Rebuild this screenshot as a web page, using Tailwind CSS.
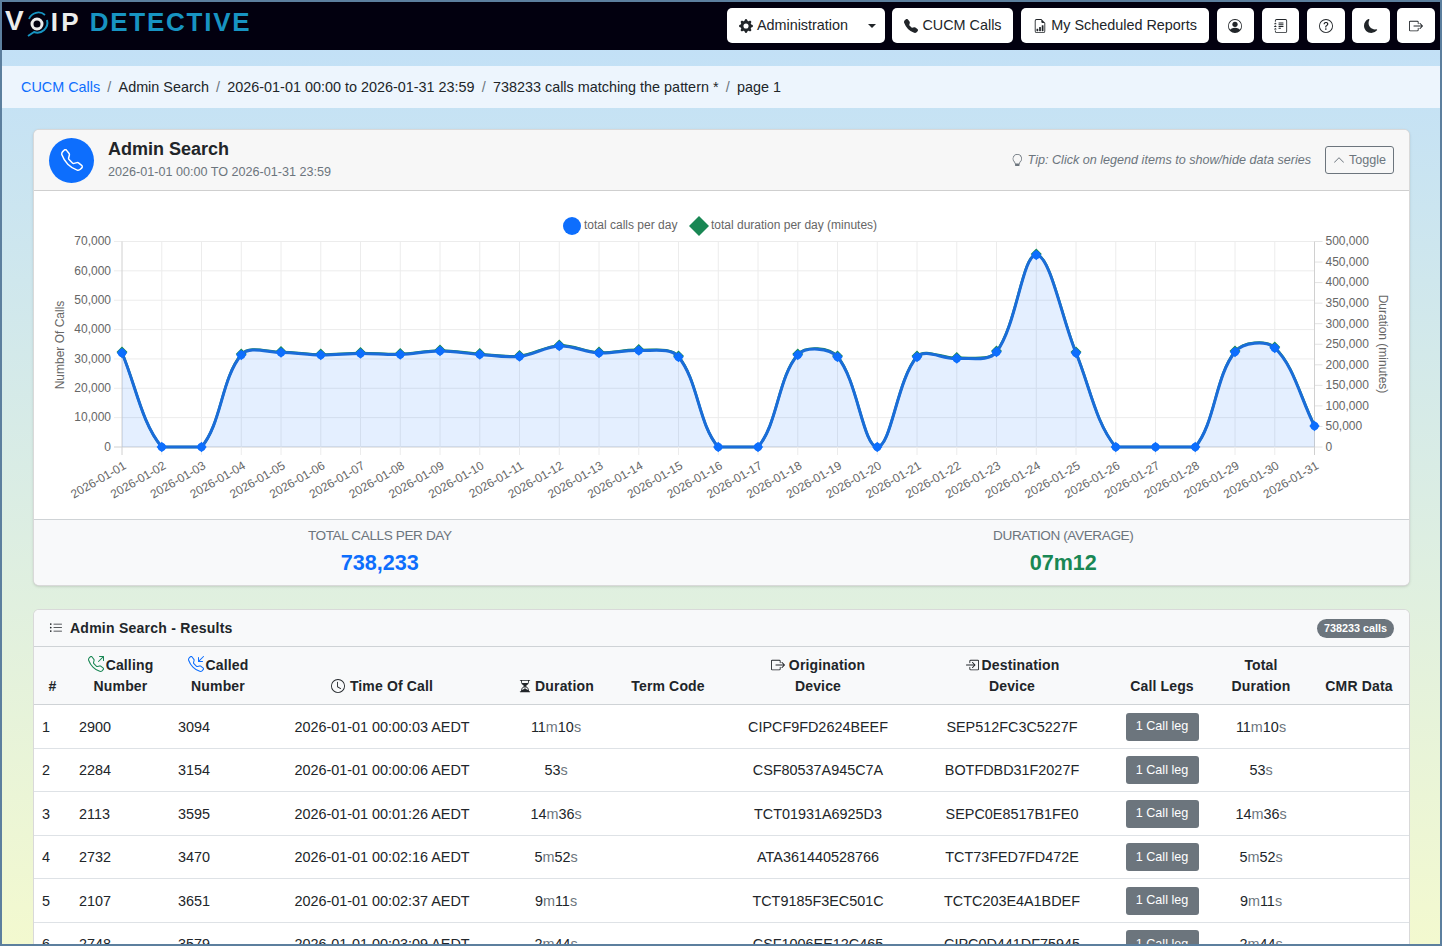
<!DOCTYPE html>
<html lang="en">
<head>
  <meta charset="UTF-8" />
  <title>VoIP Detective - Admin Search</title>
  <script src="https://cdn.jsdelivr.net/npm/@tailwindcss/browser@4"></script>
</head>
<body class="font-['Liberation_Sans',Arial,sans-serif] text-[14.4px] text-[#212529]">

  <!-- Icons -->
  <svg class="hidden">
    <symbol id="i-phone" viewBox="0 0 16 16"><path d="M3.654 1.328a.678.678 0 0 0-1.015-.063L1.605 2.3c-.483.484-.661 1.169-.45 1.77a17.6 17.6 0 0 0 4.168 6.608 17.6 17.6 0 0 0 6.608 4.168c.601.211 1.286.033 1.77-.45l1.034-1.034a.678.678 0 0 0-.063-1.015l-2.307-1.794a.68.68 0 0 0-.58-.122l-2.19.547a1.75 1.75 0 0 1-1.657-.459L5.482 8.062a1.75 1.75 0 0 1-.46-1.657l.548-2.19a.68.68 0 0 0-.122-.58zM1.884.511a1.745 1.745 0 0 1 2.612.163L6.29 2.98c.329.423.445.974.315 1.494l-.547 2.19a.68.68 0 0 0 .178.643l2.457 2.457a.68.68 0 0 0 .644.178l2.189-.547a1.75 1.75 0 0 1 1.494.315l2.306 1.794c.829.645.905 1.87.163 2.611l-1.034 1.034c-.74.74-1.846 1.065-2.877.702a18.6 18.6 0 0 1-7.01-4.42 18.6 18.6 0 0 1-4.42-7.009c-.362-1.03-.037-2.137.703-2.877z"/></symbol>
    <symbol id="i-phone-fill" viewBox="0 0 16 16"><path d="M1.885.511a1.745 1.745 0 0 1 2.61.163L6.29 2.98c.329.423.445.974.315 1.494l-.547 2.19a.68.68 0 0 0 .178.643l2.457 2.457a.68.68 0 0 0 .644.178l2.189-.547a1.75 1.75 0 0 1 1.494.315l2.306 1.794c.829.645.905 1.87.163 2.611l-1.034 1.034c-.74.74-1.846 1.065-2.877.702a18.6 18.6 0 0 1-7.01-4.42 18.6 18.6 0 0 1-4.42-7.009c-.362-1.03-.037-2.137.703-2.877z"/></symbol>
    <symbol id="i-gear" viewBox="0 0 16 16"><path d="M9.405 1.05c-.413-1.4-2.397-1.4-2.81 0l-.1.34a1.464 1.464 0 0 1-2.105.872l-.31-.17c-1.283-.698-2.686.705-1.987 1.987l.169.311c.446.82.023 1.841-.872 2.105l-.34.1c-1.4.413-1.4 2.397 0 2.81l.34.1a1.464 1.464 0 0 1 .872 2.105l-.17.31c-.698 1.283.705 2.686 1.987 1.987l.311-.169a1.464 1.464 0 0 1 2.105.872l.1.34c.413 1.4 2.397 1.4 2.81 0l.1-.34a1.464 1.464 0 0 1 2.105-.872l.31.17c1.283.698 2.686-.705 1.987-1.987l-.169-.311a1.464 1.464 0 0 1 .872-2.105l.34-.1c1.4-.413 1.4-2.397 0-2.81l-.34-.1a1.464 1.464 0 0 1-.872-2.105l.17-.31c.698-1.283-.705-2.686-1.987-1.987l-.311.169a1.464 1.464 0 0 1-2.105-.872zM8 10.93a2.929 2.929 0 1 1 0-5.86 2.929 2.929 0 0 1 0 5.858z"/></symbol>
    <symbol id="i-report" viewBox="0 0 16 16"><path d="M10 13.5a.5.5 0 0 0 .5.5h1a.5.5 0 0 0 .5-.5v-6a.5.5 0 0 0-.5-.5h-1a.5.5 0 0 0-.5.5zm-2.5.5a.5.5 0 0 1-.5-.5v-4a.5.5 0 0 1 .5-.5h1a.5.5 0 0 1 .5.5v4a.5.5 0 0 1-.5.5zm-3 0a.5.5 0 0 1-.5-.5v-2a.5.5 0 0 1 .5-.5h1a.5.5 0 0 1 .5.5v2a.5.5 0 0 1-.5.5z"/><path d="M14 14V4.5L9.5 0H4a2 2 0 0 0-2 2v12a2 2 0 0 0 2 2h8a2 2 0 0 0 2-2M9.5 3A1.5 1.5 0 0 0 11 4.5h2V14a1 1 0 0 1-1 1H4a1 1 0 0 1-1-1V2a1 1 0 0 1 1-1h5.5z"/></symbol>
    <symbol id="i-person" viewBox="0 0 16 16"><path d="M11 6a3 3 0 1 1-6 0 3 3 0 0 1 6 0"/><path fill-rule="evenodd" d="M0 8a8 8 0 1 1 16 0A8 8 0 0 1 0 8m8-7a7 7 0 0 0-5.468 11.37C3.242 11.226 4.805 10 8 10s4.757 1.225 5.468 2.37A7 7 0 0 0 8 1"/></symbol>
    <symbol id="i-journal" viewBox="0 0 16 16"><path d="M5 10.5a.5.5 0 0 1 .5-.5h2a.5.5 0 0 1 0 1h-2a.5.5 0 0 1-.5-.5m0-2a.5.5 0 0 1 .5-.5h5a.5.5 0 0 1 0 1h-5a.5.5 0 0 1-.5-.5m0-2a.5.5 0 0 1 .5-.5h5a.5.5 0 0 1 0 1h-5a.5.5 0 0 1-.5-.5m0-2a.5.5 0 0 1 .5-.5h5a.5.5 0 0 1 0 1h-5a.5.5 0 0 1-.5-.5"/><path d="M3 0h10a2 2 0 0 1 2 2v12a2 2 0 0 1-2 2H3a2 2 0 0 1-2-2v-1h1v1a1 1 0 0 0 1 1h10a1 1 0 0 0 1-1V2a1 1 0 0 0-1-1H3a1 1 0 0 0-1 1v1H1V2a2 2 0 0 1 2-2"/><path d="M1 5v-.5a.5.5 0 0 1 1 0V5h.5a.5.5 0 0 1 0 1h-2a.5.5 0 0 1 0-1zm0 3v-.5a.5.5 0 0 1 1 0V8h.5a.5.5 0 0 1 0 1h-2a.5.5 0 0 1 0-1zm0 3v-.5a.5.5 0 0 1 1 0v.5h.5a.5.5 0 0 1 0 1h-2a.5.5 0 0 1 0-1z"/></symbol>
    <symbol id="i-question" viewBox="0 0 16 16"><path d="M8 15A7 7 0 1 1 8 1a7 7 0 0 1 0 14m0 1A8 8 0 1 0 8 0a8 8 0 0 0 0 16"/><path d="M5.255 5.786a.237.237 0 0 0 .241.247h.825c.138 0 .248-.113.266-.25.09-.656.54-1.134 1.342-1.134.686 0 1.314.343 1.314 1.168 0 .635-.374.927-.965 1.371-.673.489-1.206 1.06-1.168 1.987l.003.217a.25.25 0 0 0 .25.246h.811a.25.25 0 0 0 .25-.25v-.105c0-.718.273-.927 1.01-1.486.609-.463 1.244-.977 1.244-2.056 0-1.511-1.276-2.241-2.673-2.241-1.267 0-2.655.59-2.75 2.286m1.557 5.763c0 .533.425.927 1.01.927.609 0 1.028-.394 1.028-.927 0-.552-.42-.94-1.029-.94-.584 0-1.009.388-1.009.94"/></symbol>
    <symbol id="i-moon" viewBox="0 0 16 16"><path d="M6 .278a.77.77 0 0 1 .08.858 7.2 7.2 0 0 0-.878 3.46c0 4.021 3.278 7.277 7.318 7.277q.792-.001 1.533-.16a.79.79 0 0 1 .81.316.73.73 0 0 1-.031.893A8.35 8.35 0 0 1 8.344 16C3.734 16 0 12.286 0 7.71 0 4.266 2.114 1.312 5.124.06A.75.75 0 0 1 6 .278"/></symbol>
    <symbol id="i-out" viewBox="0 0 16 16"><path d="M10 12.5a.5.5 0 0 1-.5.5h-8a.5.5 0 0 1-.5-.5v-9a.5.5 0 0 1 .5-.5h8a.5.5 0 0 1 .5.5v2a.5.5 0 0 0 1 0v-2A1.5 1.5 0 0 0 9.5 2h-8A1.5 1.5 0 0 0 0 3.5v9A1.5 1.5 0 0 0 1.5 14h8a1.5 1.5 0 0 0 1.5-1.5v-2a.5.5 0 0 0-1 0z"/><path d="M15.854 8.354a.5.5 0 0 0 0-.708l-3-3a.5.5 0 0 0-.708.708L14.293 7.5H5.5a.5.5 0 0 0 0 1h8.793l-2.147 2.146a.5.5 0 0 0 .708.708z"/></symbol>
    <symbol id="i-in" viewBox="0 0 16 16"><path d="M6 3.5a.5.5 0 0 1 .5-.5h8a.5.5 0 0 1 .5.5v9a.5.5 0 0 1-.5.5h-8a.5.5 0 0 1-.5-.5v-2a.5.5 0 0 0-1 0v2A1.5 1.5 0 0 0 6.5 14h8a1.5 1.5 0 0 0 1.5-1.5v-9A1.5 1.5 0 0 0 14.5 2h-8A1.5 1.5 0 0 0 5 3.5v2a.5.5 0 0 0 1 0z"/><path d="M11.854 8.354a.5.5 0 0 0 0-.708l-3-3a.5.5 0 1 0-.708.708L10.293 7.5H1.5a.5.5 0 0 0 0 1h8.793l-2.147 2.146a.5.5 0 0 0 .708.708z"/></symbol>
    <symbol id="i-bulb" viewBox="0 0 16 16"><path d="M2 6a6 6 0 1 1 10.174 4.31c-.203.196-.359.4-.453.619l-.762 1.769A.5.5 0 0 1 10.5 13a.5.5 0 0 1 0 1 .5.5 0 0 1 0 1l-.224.447a1 1 0 0 1-.894.553H6.618a1 1 0 0 1-.894-.553L5.5 15a.5.5 0 0 1 0-1 .5.5 0 0 1 0-1 .5.5 0 0 1-.46-.302l-.761-1.77a2 2 0 0 0-.453-.618A5.98 5.98 0 0 1 2 6m6-5a5 5 0 0 0-3.479 8.592c.263.254.514.564.676.941L5.83 12h4.342l.632-1.467c.162-.377.413-.687.676-.941A5 5 0 0 0 8 1"/></symbol>
    <symbol id="i-chevron" viewBox="0 0 16 16"><path d="M7.646 4.646a.5.5 0 0 1 .708 0l6 6a.5.5 0 0 1-.708.708L8 5.707l-5.646 5.647a.5.5 0 0 1-.708-.708z"/></symbol>
    <symbol id="i-list" viewBox="0 0 16 16"><path d="M5 11.5a.5.5 0 0 1 .5-.5h9a.5.5 0 0 1 0 1h-9a.5.5 0 0 1-.5-.5m0-4a.5.5 0 0 1 .5-.5h9a.5.5 0 0 1 0 1h-9a.5.5 0 0 1-.5-.5m0-4a.5.5 0 0 1 .5-.5h9a.5.5 0 0 1 0 1h-9a.5.5 0 0 1-.5-.5m-3 1a1 1 0 1 0 0-2 1 1 0 0 0 0 2m0 4a1 1 0 1 0 0-2 1 1 0 0 0 0 2m0 4a1 1 0 1 0 0-2 1 1 0 0 0 0 2"/></symbol>
    <symbol id="i-clock" viewBox="0 0 16 16"><path d="M8 3.5a.5.5 0 0 0-1 0V9a.5.5 0 0 0 .252.434l3.5 2a.5.5 0 0 0 .496-.868L8 8.71z"/><path d="M8 16A8 8 0 1 0 8 0a8 8 0 0 0 0 16m7-8A7 7 0 1 1 1 8a7 7 0 0 1 14 0"/></symbol>
    <symbol id="i-hourglass" viewBox="0 0 16 16"><path d="M2.5 15a.5.5 0 1 1 0-1h1v-1a4.5 4.5 0 0 1 2.557-4.06c.29-.139.443-.377.443-.59v-.7c0-.213-.154-.451-.443-.59A4.5 4.5 0 0 1 3.5 3V2h-1a.5.5 0 0 1 0-1h11a.5.5 0 0 1 0 1h-1v1a4.5 4.5 0 0 1-2.557 4.06c-.29.139-.443.377-.443.59v.7c0 .213.154.451.443.59A4.5 4.5 0 0 1 12.5 13v1h1a.5.5 0 0 1 0 1zm2-13v1c0 .537.12 1.045.337 1.5h6.326c.216-.455.337-.963.337-1.5V2zm3 6.35c0 .701-.478 1.236-1.011 1.492A3.5 3.5 0 0 0 4.5 13s.866-1.299 3-1.48zm1 0v3.17c2.134.181 3 1.48 3 1.48a3.5 3.5 0 0 0-1.989-3.158C8.978 9.586 8.5 9.052 8.5 8.351z"/></symbol>
    <symbol id="i-outbound" viewBox="0 0 16 16"><use href="#i-phone"/><path d="M11 .5a.5.5 0 0 1 .5-.5h4a.5.5 0 0 1 .5.5v4a.5.5 0 0 1-1 0V1.707l-4.146 4.147a.5.5 0 0 1-.708-.708L14.293 1H11.5a.5.5 0 0 1-.5-.5"/></symbol>
    <symbol id="i-inbound" viewBox="0 0 16 16"><use href="#i-phone"/><path d="M15.854.146a.5.5 0 0 1 0 .708L11.707 5H14.5a.5.5 0 0 1 0 1h-4a.5.5 0 0 1-.5-.5v-4a.5.5 0 0 1 1 0v2.793L15.146.146a.5.5 0 0 1 .708 0"/></symbol>
  </svg>

  <div class="h-[946px] overflow-hidden border-2 border-[#5c7f9e] bg-linear-to-b from-[#c0dff8] to-[#f3f9cf]">

    <!-- Navbar -->
    <header class="h-[48px] bg-[#02000f] flex justify-between">
      <div class="flex items-start pt-[6px] pl-[3px] font-bold text-[26px] leading-[28px]">
        <span class="text-[#ececec] text-[28px] tracking-[1px] -mt-[1px]">V</span>
        <svg class="w-[25px] h-[28px] mt-[2px] shrink-0" viewBox="0 0 25 28" fill="none">
          <path d="M4 9 A10 10 0 0 1 20 5" stroke="#1794c2" stroke-width="1.8"/>
          <path d="M22 10 A10 10 0 0 1 9 22 L3 26" stroke="#1794c2" stroke-width="2"/>
          <circle cx="12" cy="14" r="5" stroke="#ececec" stroke-width="3"/>
        </svg>
        <span class="text-[#ececec] ml-[1px] tracking-[3.4px]">IP</span>
        <span class="text-[#1794c2] ml-[7.6px] tracking-[1.75px]">DETECTIVE</span>
      </div>
      <nav class="flex gap-[7.6px] pt-[6px] pr-[5px]">
        <button class="w-[158px] h-[35px] bg-white rounded-[5px] flex items-center pl-[12px]">
          <svg class="w-[14px] h-[14px] mr-[4px]" fill="currentColor"><use href="#i-gear"/></svg>Administration
          <span class="ml-auto mr-[9px] border-x-[4px] border-t-[4px] border-x-transparent border-t-[#212529]"></span>
        </button>
        <button class="w-[121px] h-[35px] bg-white rounded-[5px] flex items-center justify-center gap-[4px]">
          <svg class="w-[14px] h-[14px]" fill="currentColor"><use href="#i-phone-fill"/></svg>CUCM Calls
        </button>
        <button class="w-[188px] h-[35px] bg-white rounded-[5px] flex items-center justify-center gap-[4px]">
          <svg class="w-[14px] h-[14px]" fill="currentColor"><use href="#i-report"/></svg>My Scheduled Reports
        </button>
        <button class="w-[37.6px] h-[35px] bg-white rounded-[5px] flex items-center justify-center"><svg class="w-[14px] h-[14px]" fill="currentColor"><use href="#i-person"/></svg></button>
        <button class="w-[37.6px] h-[35px] bg-white rounded-[5px] flex items-center justify-center"><svg class="w-[14px] h-[14px]" fill="currentColor"><use href="#i-journal"/></svg></button>
        <button class="w-[37.6px] h-[35px] bg-white rounded-[5px] flex items-center justify-center"><svg class="w-[14px] h-[14px]" fill="currentColor"><use href="#i-question"/></svg></button>
        <button class="w-[37.6px] h-[35px] bg-white rounded-[5px] flex items-center justify-center"><svg class="w-[14px] h-[14px]" fill="currentColor"><use href="#i-moon"/></svg></button>
        <button class="w-[37.6px] h-[35px] bg-white rounded-[5px] flex items-center justify-center"><svg class="w-[14px] h-[14px]" fill="currentColor"><use href="#i-out"/></svg></button>
      </nav>
    </header>

    <!-- Breadcrumb -->
    <div class="mt-[16px] h-[42px] pt-[1px] bg-[#edf5fd] flex items-center pl-[19px] gap-[7.2px]">
      <span class="text-[#0d6efd]">CUCM Calls</span><span class="text-[#6c757d]">/</span>
      <span>Admin Search</span><span class="text-[#6c757d]">/</span>
      <span>2026-01-01 00:00 to 2026-01-31 23:59</span><span class="text-[#6c757d]">/</span>
      <span>738233 calls matching the pattern *</span><span class="text-[#6c757d]">/</span>
      <span>page 1</span>
    </div>

    <main class="pl-[31px] pr-[30px]">
      <!-- Chart card -->
      <section class="mt-[21px] h-[457px] bg-white rounded-[6px] border border-black/15 shadow-sm overflow-hidden flex flex-col">
        <div class="h-[61px] shrink-0 bg-[#f7f7f7] border-b border-[#cfcfcf] flex items-center px-[15px]">
          <div class="w-[45px] h-[45px] rounded-full bg-[#0d6efd] flex items-center justify-center">
            <svg class="w-[22px] h-[22px] text-white" fill="currentColor"><use href="#i-phone"/></svg>
          </div>
          <div class="ml-[14px]">
            <div class="text-[18px] leading-[22px] font-bold -mt-[1px]">Admin Search</div>
            <div class="text-[12.6px] leading-[19px] mt-[3px] text-[#6c757d]">2026-01-01 00:00 TO 2026-01-31 23:59</div>
          </div>
          <div class="ml-auto flex items-center text-[12.6px] italic text-[#6c757d]">
            <svg class="w-[12.6px] h-[12.6px] mr-[4px]" fill="currentColor"><use href="#i-bulb"/></svg>Tip: Click on legend items to show/hide data series
          </div>
          <button class="ml-[14px] w-[69px] h-[28px] rounded-[3px] border border-[#6c757d] text-[#6c757d] text-[12.6px] flex items-center justify-center gap-[4px]">
            <svg class="w-[12px] h-[12px]" fill="currentColor"><use href="#i-chevron"/></svg>Toggle
          </button>
        </div>

        <svg id="chart" class="w-[1375px] h-[328px] shrink-0" viewBox="34 191 1375 328" font-size="12" fill="#666"></svg>

        <div class="flex-1 bg-[#f8f9fa] border-t border-[#cfd3d6] grid grid-cols-2 px-[4px] text-center">
          <div>
            <div class="mt-[7px] leading-[18px] text-[13.6px] tracking-[-0.4px] text-[#6c757d]">TOTAL CALLS PER DAY</div>
            <div class="mt-[5px] text-[21.6px] leading-[26px] font-bold text-[#0d6efd]">738,233</div>
          </div>
          <div>
            <div class="mt-[7px] leading-[18px] text-[13.6px] tracking-[-0.4px] text-[#6c757d]">DURATION (AVERAGE)</div>
            <div class="mt-[5px] text-[21.6px] leading-[26px] font-bold text-[#198754]">07m12</div>
          </div>
        </div>
      </section>

      <!-- Results card -->
      <section class="mt-[23px] bg-white rounded-t-[6px] border border-black/15 overflow-hidden">
        <div class="h-[37px] bg-[#f8f9fa] border-b border-[#cfd3d6] flex items-center justify-between px-[15px]">
          <div class="flex items-center font-bold text-[14px] tracking-[0.25px]">
            <svg class="w-[14px] h-[14px] mr-[7px]" fill="currentColor"><use href="#i-list"/></svg>Admin Search - Results
          </div>
          <span class="h-[19px] px-[7px] rounded-full bg-[#6c757d] text-white text-[10.8px] font-bold leading-[19px]">738233 calls</span>
        </div>
        <table class="w-full table-fixed border-collapse">
          <thead class="bg-[#f8f9fa] text-[14px] leading-[21px] tracking-[0.15px]">
            <tr class="h-[57px] border-b border-[#cfd3d6] align-bottom">
              <th class="w-[37px] pb-[7px]">#</th>
              <th class="w-[99px] pb-[7px]"><svg class="inline w-[16px] h-[16px] mr-[2px] -mt-[3px] text-[#198754]" fill="currentColor"><use href="#i-outbound"/></svg>Calling<br>Number</th>
              <th class="w-[96px] pb-[7px]"><svg class="inline w-[16px] h-[16px] mr-[2px] -mt-[3px] text-[#0d6efd]" fill="currentColor"><use href="#i-inbound"/></svg>Called<br>Number</th>
              <th class="w-[232px] pb-[7px]"><svg class="inline w-[14px] h-[14px] mr-[5px] -mt-[2px]" fill="currentColor"><use href="#i-clock"/></svg>Time Of Call</th>
              <th class="w-[116px] pb-[7px]"><svg class="inline w-[14px] h-[14px] mr-[3px] -mt-[2px]" fill="currentColor"><use href="#i-hourglass"/></svg>Duration</th>
              <th class="w-[108px] pb-[7px]">Term Code</th>
              <th class="w-[192px] pb-[7px]"><svg class="inline w-[14px] h-[14px] mr-[4px] -mt-[2px]" fill="currentColor"><use href="#i-out"/></svg>Origination<br>Device</th>
              <th class="w-[196px] pb-[7px]"><svg class="inline w-[14px] h-[14px] mr-[3px] -mt-[2px]" fill="currentColor"><use href="#i-in"/></svg>Destination<br>Device</th>
              <th class="w-[104px] pb-[7px]">Call Legs</th>
              <th class="w-[94px] pb-[7px]">Total<br>Duration</th>
              <th class="w-[102px] pb-[7px]">CMR Data</th>
            </tr>
          </thead>
          <tbody>
            <tr class="h-[44px] border-b border-[#dee2e6] text-center [&>td]:pt-[3px]">
              <td class="pl-[8px] text-left">1</td><td class="pl-[8px] text-left">2900</td><td class="pl-[8px] text-left">3094</td><td>2026-01-01 00:00:03 AEDT</td>
              <td>11<span class="text-[#6c757d]">m</span>10<span class="text-[#6c757d]">s</span></td><td></td><td>CIPCF9FD2624BEEF</td><td>SEP512FC3C5227F</td>
              <td><button class="-mt-[2px] w-[73px] h-[28px] rounded-[3px] bg-[#6c757d] text-white text-[12.6px]">1 Call leg</button></td>
              <td>11<span class="text-[#6c757d]">m</span>10<span class="text-[#6c757d]">s</span></td><td></td>
            </tr>
            <tr class="h-[43px] border-b border-[#dee2e6] text-center [&>td]:pt-[3px]">
              <td class="pl-[8px] text-left">2</td><td class="pl-[8px] text-left">2284</td><td class="pl-[8px] text-left">3154</td><td>2026-01-01 00:00:06 AEDT</td>
              <td>53<span class="text-[#6c757d]">s</span></td><td></td><td>CSF80537A945C7A</td><td>BOTFDBD31F2027F</td>
              <td><button class="-mt-[2px] w-[73px] h-[28px] rounded-[3px] bg-[#6c757d] text-white text-[12.6px]">1 Call leg</button></td>
              <td>53<span class="text-[#6c757d]">s</span></td><td></td>
            </tr>
            <tr class="h-[44px] border-b border-[#dee2e6] text-center [&>td]:pt-[3px]">
              <td class="pl-[8px] text-left">3</td><td class="pl-[8px] text-left">2113</td><td class="pl-[8px] text-left">3595</td><td>2026-01-01 00:01:26 AEDT</td>
              <td>14<span class="text-[#6c757d]">m</span>36<span class="text-[#6c757d]">s</span></td><td></td><td>TCT01931A6925D3</td><td>SEPC0E8517B1FE0</td>
              <td><button class="-mt-[2px] w-[73px] h-[28px] rounded-[3px] bg-[#6c757d] text-white text-[12.6px]">1 Call leg</button></td>
              <td>14<span class="text-[#6c757d]">m</span>36<span class="text-[#6c757d]">s</span></td><td></td>
            </tr>
            <tr class="h-[43px] border-b border-[#dee2e6] text-center [&>td]:pt-[3px]">
              <td class="pl-[8px] text-left">4</td><td class="pl-[8px] text-left">2732</td><td class="pl-[8px] text-left">3470</td><td>2026-01-01 00:02:16 AEDT</td>
              <td>5<span class="text-[#6c757d]">m</span>52<span class="text-[#6c757d]">s</span></td><td></td><td>ATA361440528766</td><td>TCT73FED7FD472E</td>
              <td><button class="-mt-[2px] w-[73px] h-[28px] rounded-[3px] bg-[#6c757d] text-white text-[12.6px]">1 Call leg</button></td>
              <td>5<span class="text-[#6c757d]">m</span>52<span class="text-[#6c757d]">s</span></td><td></td>
            </tr>
            <tr class="h-[44px] border-b border-[#dee2e6] text-center [&>td]:pt-[3px]">
              <td class="pl-[8px] text-left">5</td><td class="pl-[8px] text-left">2107</td><td class="pl-[8px] text-left">3651</td><td>2026-01-01 00:02:37 AEDT</td>
              <td>9<span class="text-[#6c757d]">m</span>11<span class="text-[#6c757d]">s</span></td><td></td><td>TCT9185F3EC501C</td><td>TCTC203E4A1BDEF</td>
              <td><button class="-mt-[2px] w-[73px] h-[28px] rounded-[3px] bg-[#6c757d] text-white text-[12.6px]">1 Call leg</button></td>
              <td>9<span class="text-[#6c757d]">m</span>11<span class="text-[#6c757d]">s</span></td><td></td>
            </tr>
            <tr class="h-[43px] border-b border-[#dee2e6] text-center [&>td]:pt-[3px]">
              <td class="pl-[8px] text-left">6</td><td class="pl-[8px] text-left">2748</td><td class="pl-[8px] text-left">3579</td><td>2026-01-01 00:03:09 AEDT</td>
              <td>2<span class="text-[#6c757d]">m</span>44<span class="text-[#6c757d]">s</span></td><td></td><td>CSF1006EE12C465</td><td>CIPC0D441DF75945</td>
              <td><button class="-mt-[2px] w-[73px] h-[28px] rounded-[3px] bg-[#6c757d] text-white text-[12.6px]">1 Call leg</button></td>
              <td>2<span class="text-[#6c757d]">m</span>44<span class="text-[#6c757d]">s</span></td><td></td>
            </tr>
          </tbody>
        </table>
      </section>
    </main>
  </div>

  <script>
    // Chart drawn the way chart.js does it: beziers capped to the plot area
    const NS = 'http://www.w3.org/2000/svg';
    const chart = document.getElementById('chart');
    const left = 122, right = 1314.5, top_ = 241.5, bottom = 447;
    const step = (right - left) / 30;
    const tension = 0.35;
    const calls = [353,447,447,355,352.5,355,353.5,354.5,351,354.5,356.5,346,353,350.5,357,447,447,355,357,447,357,358.5,352,255,353,447,447,447,352,348,426];

    function add(tag, attrs, text) {
      const el = document.createElementNS(NS, tag);
      for (const k in attrs) el.setAttribute(k, attrs[k]);
      if (text) el.textContent = text;
      chart.appendChild(el);
      return el;
    }

    function curve(ys) {
      const pts = ys.map((y, i) => ({ x: left + i * step, y }));
      const cps = pts.map((p, i) => {
        const a = pts[i - 1] || p, b = pts[i + 1] || p;
        const d1 = Math.hypot(p.x - a.x, p.y - a.y), d2 = Math.hypot(b.x - p.x, b.y - p.y);
        const sum = d1 + d2 || 1;
        const clamp = v => Math.min(bottom, Math.max(top_, v));
        return {
          px: p.x - tension * d1 / sum * (b.x - a.x), py: clamp(p.y - tension * d1 / sum * (b.y - a.y)),
          nx: p.x + tension * d2 / sum * (b.x - a.x), ny: clamp(p.y + tension * d2 / sum * (b.y - a.y))
        };
      });
      let d = `M${pts[0].x} ${pts[0].y}`;
      for (let i = 1; i < pts.length; i++) {
        d += `C${cps[i - 1].nx} ${cps[i - 1].ny} ${cps[i].px} ${cps[i].py} ${pts[i].x} ${pts[i].y}`;
      }
      return d;
    }

    // grid
    for (let i = 0; i <= 7; i++) {
      const y = bottom - i * (bottom - top_) / 7;
      add('line', { x1: 114, x2: right, y1: y, y2: y, stroke: i ? '#ececec' : '#d0d0d0' });
      add('text', { x: 111, y: y + 3.8, 'text-anchor': 'end' }, (i * 10000).toLocaleString('en-US'));
    }
    for (let i = 0; i <= 10; i++) {
      const y = bottom - i * (bottom - top_) / 10;
      add('line', { x1: right, x2: right + 8, y1: y, y2: y, stroke: '#e2e2e2' });
      add('text', { x: 1325.5, y: y + 3.8 }, (i * 50000).toLocaleString('en-US'));
    }
    calls.forEach((_, i) => {
      const x = left + i * step;
      const edge = i === 0 || i === 30;
      add('line', { x1: x, x2: x, y1: top_, y2: 455, stroke: edge ? '#d0d0d0' : '#ececec' });
      const d = String(i + 1).padStart(2, '0');
      add('text', { x: x + 5, y: 468, 'text-anchor': 'end', transform: `rotate(-30 ${x + 5} 468)` }, `2026-01-${d}`);
    });

    // axis titles
    add('text', { x: 0, y: 0, 'text-anchor': 'middle', transform: 'translate(64 345) rotate(-90)' }, 'Number Of Calls');
    add('text', { x: 0, y: 0, 'text-anchor': 'middle', transform: 'translate(1379 344) rotate(90)' }, 'Duration (minutes)');

    // legend
    add('circle', { cx: 572, cy: 226, r: 9, fill: '#0d6efd' });
    add('text', { x: 584, y: 229 }, 'total calls per day');
    add('path', { d: 'M699 216l10 10-10 10-10-10z', fill: '#198754' });
    add('text', { x: 711, y: 229 }, 'total duration per day (minutes)');

    // series, the green one sits almost exactly behind the blue one
    const greenY = calls.map(y => y === 447 ? 447 : y - 0.6);
    add('path', { d: curve(greenY), fill: 'none', stroke: '#198754', 'stroke-width': 2.5 });
    calls.forEach((y, i) => {
      if (y === 447 || i === 30) return;
      const x = left + i * step;
      add('path', { d: `M${x} ${y - 6.5}l5.5 5.5-5.5 5.5-5.5-5.5z`, fill: '#198754' });
    });
    add('path', { d: `${curve(calls)}L${right} ${bottom}L${left} ${bottom}Z`, fill: 'rgba(13,110,253,0.11)' });
    add('path', { d: curve(calls), fill: 'none', stroke: '#1a6cd9', 'stroke-width': 3 });
    calls.forEach((y, i) => {
      const x = left + i * step;
      add('circle', { cx: x, cy: y, r: 4, fill: '#0d6efd' });
      add('path', { d: `M${x} ${y - 5.2}l5.2 5.2-5.2 5.2-5.2-5.2z`, fill: '#0d6efd' });
    });
  </script>
</body>
</html>
